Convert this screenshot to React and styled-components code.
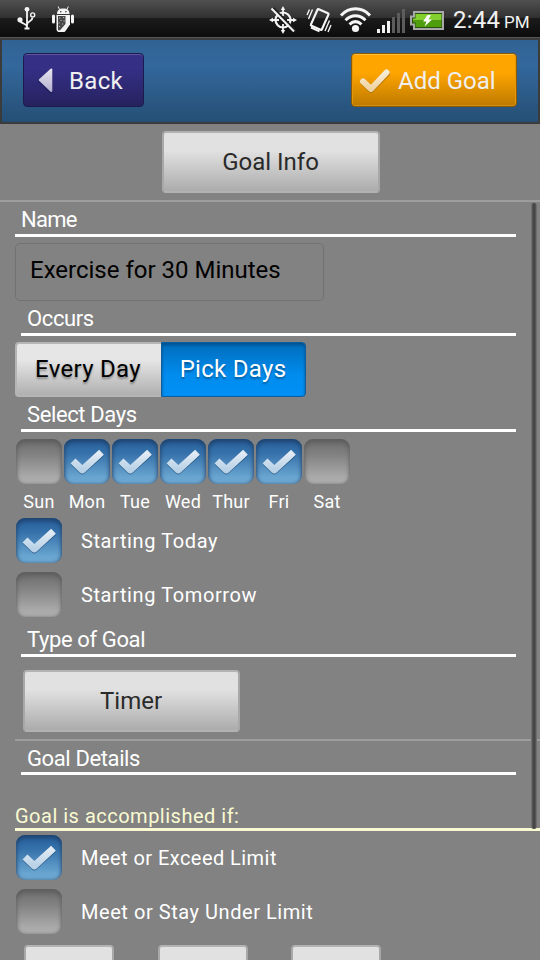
import styled, { createGlobalStyle, css } from "styled-components";

const GlobalStyle = createGlobalStyle`
  * {
    box-sizing: border-box;
  }
  body {
    margin: 0;
    background: #828282;
    font-family: Roboto, "Liberation Sans", sans-serif;
  }
  button, input {
    font-family: inherit;
    margin: 0;
  }
  svg {
    display: block;
    flex: none;
  }
`;

const Screen = styled.div`
  width: 540px;
  height: 960px;
  overflow: hidden;
  display: flex;
  flex-direction: column;
  background: #828282;
`;

const StatusBar = styled.div`
  flex: none;
  height: 38px;
  padding: 0 9px 0 14px;
  display: flex;
  align-items: flex-start;
  justify-content: space-between;
  border-bottom: 1px solid #555;
  background: linear-gradient(#505050 0, #303030 18px, #1b1b1b 18px, #0c0c0c 37px);
`;

const StatusGroup = styled.div`
  display: flex;
`;

const Clock = styled.div`
  width: 86px;
  padding-left: 8px;
  white-space: nowrap;
  line-height: 40px;
  font-size: 24px;
  letter-spacing: 0.2px;
  color: #f2f2f2;
  small {
    font-size: 17px;
    margin-left: 4px;
    letter-spacing: 0;
  }
`;

const Header = styled.header`
  flex: none;
  height: 86px;
  padding: 13px 21px 0;
  display: flex;
  justify-content: space-between;
  align-items: flex-start;
  border: 2px solid #3b3b3b;
  background: linear-gradient(#316294 0, #33689c 30%, #254f75 100%);
`;

const HeaderButton = styled.button`
  height: 54px;
  padding: 1px 0 0;
  display: flex;
  align-items: center;
  border-radius: 4px;
  font-size: 24px;
  line-height: 28px;
  color: #f0f0f0;
  ${({ $accent }) =>
    $accent
      ? css`
          width: 166px;
          border: 1px solid #8a5a04;
          background: linear-gradient(#ffa500 0, #ffa500 35%, #bd7a00 100%);
          box-shadow: inset 0 1px #ffbc3f, inset 1px 0 #e59708, inset -1px 0 #e59708, inset 0 -1px #cf8d12;
          letter-spacing: 0;
        `
      : css`
          width: 121px;
          border: 1px solid #1d1b4e;
          background: linear-gradient(#352f85 0, #352f85 30%, #26225e 100%);
          box-shadow: inset 0 1px #5c579c;
          letter-spacing: 0.35px;
        `}
`;

const GreyButton = styled.button`
  width: ${({ $width }) => $width || 218}px;
  height: 62px;
  padding: 0 1px 0 0;
  border: 2px solid #b2b2b2;
  border-left-color: #a8a8a8;
  border-right-color: #a8a8a8;
  border-radius: 4px;
  background: linear-gradient(#e1e1e1 0, #e1e1e1 30%, #acacac 100%);
  font-size: 24px;
  letter-spacing: 0;
  color: #2a2a2a;
`;

const InfoBar = styled.div`
  flex: none;
  height: 78px;
  padding: 7px 0 0 2px;
  display: flex;
  justify-content: center;
  align-items: flex-start;
  border-bottom: 2px solid #9d9d9d;
`;

const Content = styled.main`
  flex: 1;
  min-height: 0;
  position: relative;
  padding-left: 15px;
`;

const ScrollThumb = styled.div`
  position: absolute;
  top: 1px;
  right: 3px;
  width: 6px;
  height: 626px;
  border-radius: 3px;
  background: linear-gradient(90deg, #7a7a7a, #484848 35%, #454545 65%, #7a7a7a);
`;

const Heading = styled.h2`
  height: ${({ $height }) => $height || 35}px;
  margin: 0 24px 0 ${({ $flush }) => ($flush ? 0 : 6)}px;
  padding-left: 6px;
  display: flex;
  align-items: flex-end;
  border-bottom: 3px solid #fff;
  font-size: 22px;
  font-weight: 400;
  line-height: ${({ $line }) => $line || 28}px;
  letter-spacing: ${({ $flush }) => ($flush ? -0.7 : -0.38)}px;
  color: #fff;
`;

const Condition = styled(Heading)`
  height: 56px;
  margin: 0 0 4px;
  padding-left: 0;
  border-color: #fafad2;
  font-size: 20px;
  line-height: 24px;
  letter-spacing: 0.5px;
  color: #fafad2;
`;

const NameInput = styled.input`
  display: block;
  width: 309px;
  height: 58px;
  margin-top: 6px;
  padding: 0 14px 4px;
  border: 1px solid #717171;
  border-radius: 5px;
  background: transparent;
  font-size: 24px;
  letter-spacing: 0;
  color: #000;
`;

const Segments = styled.div`
  display: flex;
  width: 291px;
  height: 55px;
  margin-top: 6px;
`;

const Segment = styled.button`
  padding: 0 0 1px;
  font-size: 24px;
  letter-spacing: 0.3px;
  text-shadow: 0 2px 2px rgba(0, 0, 0, 0.33);
  ${({ $active }) =>
    $active
      ? css`
          width: 145px;
          padding-right: 1px;
          border: 1px solid #0b5f9f;
          border-radius: 0 4px 4px 0;
          background: linear-gradient(#006cba 0, #008cee 60%, #0090f5 100%);
          box-shadow: inset 0 2px 3px #00508f;
          color: #fff;
        `
      : css`
          width: 146px;
          padding-right: 2px;
          border: 2px solid #b5b5b5;
          border-right-width: 0;
          border-radius: 4px 0 0 4px;
          background: linear-gradient(#e6e6e6 0, #e6e6e6 30%, #b0b0b0 100%);
          color: #000;
        `}
`;

const Days = styled.div`
  display: flex;
  margin-top: 7px;
  height: 79px;
`;

const Day = styled.label`
  width: 48px;
  display: flex;
  flex-direction: column;
  align-items: center;
  font-size: 18px;
  line-height: 22px;
  letter-spacing: 0.25px;
  color: #fff;
  span {
    margin-top: 7px;
  }
`;

const Option = styled.label`
  height: 46px;
  margin: 0 0 8px 1px;
  display: flex;
  align-items: flex-start;
  font-size: 20px;
  line-height: 46px;
  letter-spacing: ${({ $track }) => $track ?? 0.6}px;
  color: #fff;
  span {
    margin-left: 19px;
  }
`;

const OptionGroup = styled.div`
  margin-bottom: -8px;
  height: 108px;
`;

const Tick = styled.div`
  flex: none;
  width: 46px;
  height: 45px;
  border-radius: 9px;
  background: ${({ $on }) =>
    $on
      ? "linear-gradient(#2a619f 0, #3470a9 30%, #69a5d0 85%, #6ba6d0 100%)"
      : "linear-gradient(#6c6c6c 0, #828282 35%, #aaaaaa 85%, #adadad 100%)"};
  box-shadow: inset 0 3px 5px ${({ $on }) => ($on ? "#1c416c" : "#5c5c5c")},
    inset 0 0 3px ${({ $on }) => ($on ? "rgba(80, 105, 130, 0.8)" : "rgba(120, 120, 120, 0.8)")};
`;

const TypeRow = styled.div`
  height: 84px;
  padding: 13px 0 0 8px;
  border-bottom: 2px solid #9d9d9d;
`;

const Amounts = styled.div`
  display: flex;
  gap: 43.5px;
  padding: 10px 0 0 9px;
`;

const UsbIcon = () => (
  <svg width="32" height="37" viewBox="14 0 32 37" fill="none" stroke="#f4f4f4" strokeWidth="1.8">
    <path d="M27 9v19M20 20c0 4 7 3 7 7M32.5 17.5c0 4.500-5.500 3-5.500 7.500" />
    <circle cx="27" cy="9.300" r="2.400" fill="#f4f4f4" stroke="none" />
    <circle cx="20" cy="19.800" r="2.600" fill="#f4f4f4" stroke="none" />
    <circle cx="32.700" cy="14.900" r="2" strokeWidth="1.400" />
    <path d="M24.500 28.500h5" strokeWidth="2" />
  </svg>
);

const RobotIcon = () => (
  <svg width="32" height="37" viewBox="46 0 32 37" fill="#f4f4f4">
    <path d="M57 14c0-3.500 2-5.500 6.300-5.500s6.200 2 6.200 5.500z" />
    <path d="M59.500 9.500 58.200 6.500M67 9.500l1.300-3" stroke="#f4f4f4" />
    <rect x="52" y="14.500" width="3" height="9" rx="1.500" />
    <rect x="71" y="14.500" width="3" height="9" rx="1.500" />
    <path d="M56.500 15H70v9.500l-4.500 6.500-1 1H58l-1.500-2z" />
    <path d="M58 16h7.500v8L60 30.300h-2z" fill="#484848" />
    <path
      d="M59 18h1.200M63 17.500h1.200M60.500 20.500h1.200M63.500 21h1.200M58.500 23h1.200M62 24h1.200M59 26.500h1.200"
      stroke="#bbb"
      strokeWidth="1.200"
    />
    <circle cx="60.800" cy="11.700" r="0.700" fill="#222" />
    <circle cx="65.900" cy="11.700" r="0.700" fill="#222" />
  </svg>
);

const GpsOffIcon = () => (
  <svg width="34" height="37" viewBox="268 0 34 37" fill="none" stroke="#f4f4f4">
    <circle cx="283" cy="20" r="7.500" strokeWidth="2.200" />
    <path d="M283 9v7M283 24v7M272 20h7M287 20h7" strokeWidth="1.800" />
    <path
      d="M283 6l2.200 4h-4.400zM283 34l2.200-4h-4.400zM269 20l4-2.200v4.400zM297 20l-4-2.200v4.400z"
      fill="#f4f4f4"
      stroke="none"
    />
    <path d="M273.500 8 296 31" stroke="#202020" strokeWidth="2" />
    <path d="M271.500 8.500 294 31.500" strokeWidth="2" />
  </svg>
);

const VibrateIcon = () => (
  <svg width="36" height="37" viewBox="302 0 36 37" fill="none" stroke="#f4f4f4">
    <rect
      x="313.500"
      y="10.500"
      width="12"
      height="18"
      rx="1"
      strokeWidth="2.200"
      transform="rotate(24 319.500 20)"
    />
    <path d="M311 27.500l8.500 3.800" strokeWidth="2" />
    <path
      d="M309.500 9.500l-2.500 5.500M312.500 9.500l-4 9.500M329.500 20.500l-4.500 10.500M331 25l-3 7"
      strokeWidth="1.400"
    />
  </svg>
);

const WifiIcon = () => (
  <svg width="37" height="37" viewBox="338 0 37 37" fill="none" stroke="#f6f6f6" strokeWidth="3">
    <path d="M341 15.500c8-9 21-9 29 0M345.500 20.200c6-6 14-6 20 0M349.500 24.300c4-3.600 8-3.600 12 0" />
    <circle cx="355.500" cy="28.500" r="3.600" fill="#f6f6f6" stroke="none" />
  </svg>
);

const SignalIcon = () => (
  <svg width="33" height="37" viewBox="375 0 33 37">
    {[29, 25, 21, 17, 13, 9].map((top, i) => (
      <rect
        key={top}
        x={377 + i * 5}
        y={top}
        width="3"
        height={33 - top}
        fill={i < 3 ? "#f2f2f2" : "#5c5c5c"}
      />
    ))}
  </svg>
);

const BatteryIcon = () => (
  <svg width="37" height="37" viewBox="408 0 37 37">
    <path d="M414 12H443V29H414V24.500H411V16.500H414z" fill="#2b4d12" stroke="#a9a9a9" strokeWidth="2" />
    <path d="M415.500 14h26v6.500h-28.500v-2h2.500z" fill="#82cf2e" />
    <path d="M413 20.500h28.500v6.500h-26v-4.500H413z" fill="#4e9e0c" />
    <path d="M427.500 15l-4.500 6.500h3.500L424.500 26.500l7.500-7h-3.500l2.500-4.500z" fill="#fff" />
  </svg>
);

const ArrowIcon = () => (
  <svg width="45" height="52" viewBox="24 54 45 52">
    <defs>
      <linearGradient id="arrow" x1="0" y1="0" x2="0" y2="1">
        <stop offset="0" stopColor="#e6e4ee" />
        <stop offset="1" stopColor="#b6b2d2" />
      </linearGradient>
    </defs>
    <path
      d="M39.500 80.500 51 69.500v22z"
      fill="#1d1950"
      stroke="#1d1950"
      strokeWidth="3"
      strokeLinejoin="round"
      opacity=".45"
    />
    <path
      d="M39.800 79 51.300 68.500V90z"
      fill="url(#arrow)"
      stroke="url(#arrow)"
      strokeWidth="2"
      strokeLinejoin="round"
    />
  </svg>
);

const AddIcon = () => (
  <svg
    width="46"
    height="52"
    viewBox="353 54 46 52"
    fill="none"
    strokeWidth="6"
    strokeLinejoin="round"
    strokeLinecap="round"
  >
    <defs>
      <linearGradient id="addCheck" x1="0" y1="0" x2="0" y2="1">
        <stop offset="0" stopColor="#f7ecd8" />
        <stop offset="1" stopColor="#efd3a0" />
      </linearGradient>
    </defs>
    <path d="M364.300 81.500 372 89 388 73" stroke="#6b4500" opacity=".35" />
    <path d="M364 80.500 372 88 387.500 71.500" stroke="url(#addCheck)" strokeWidth="6" />
  </svg>
);

const CheckIcon = () => (
  <svg width="46" height="45" viewBox="0 0 46 45" fill="none" strokeWidth="7" strokeLinejoin="round">
    <defs>
      <linearGradient id="check" x1="0" y1="0" x2="0" y2="1">
        <stop offset="0" stopColor="#e3ecf4" />
        <stop offset="1" stopColor="#b9d2e7" />
      </linearGradient>
    </defs>
    <path d="M9.200 23.200 18.300 32 37.800 14.200" stroke="#173f68" opacity=".5" />
    <path d="M9 22 18.300 30.900 37.500 13.200" stroke="url(#check)" />
  </svg>
);

const days = [
  ["Sun", false],
  ["Mon", true],
  ["Tue", true],
  ["Wed", true],
  ["Thur", true],
  ["Fri", true],
  ["Sat", false],
];

function Checkbox({ checked }) {
  return <Tick $on={checked}>{checked && <CheckIcon />}</Tick>;
}

function CheckOption({ checked, track, children }) {
  return (
    <Option $track={track}>
      <Checkbox checked={checked} />
      <span>{children}</span>
    </Option>
  );
}

export default function App() {
  return (
    <Screen>
      <GlobalStyle />
      <StatusBar>
        <StatusGroup>
          <UsbIcon />
          <RobotIcon />
        </StatusGroup>
        <StatusGroup>
          <GpsOffIcon />
          <VibrateIcon />
          <WifiIcon />
          <SignalIcon />
          <BatteryIcon />
          <Clock>
            2:44<small>PM</small>
          </Clock>
        </StatusGroup>
      </StatusBar>
      <Header>
        <HeaderButton>
          <ArrowIcon />
          Back
        </HeaderButton>
        <HeaderButton $accent>
          <AddIcon />
          Add Goal
        </HeaderButton>
      </Header>
      <InfoBar>
        <GreyButton>Goal Info</GreyButton>
      </InfoBar>
      <Content>
        <Heading $flush>Name</Heading>
        <NameInput defaultValue="Exercise for 30 Minutes" />
        <Heading>Occurs</Heading>
        <Segments>
          <Segment>Every Day</Segment>
          <Segment $active>Pick Days</Segment>
        </Segments>
        <Heading>Select Days</Heading>
        <Days>
          {days.map(([name, checked]) => (
            <Day key={name}>
              <Checkbox checked={checked} />
              <span>{name}</span>
            </Day>
          ))}
        </Days>
        <OptionGroup>
          <CheckOption checked>Starting Today</CheckOption>
          <CheckOption>Starting Tomorrow</CheckOption>
        </OptionGroup>
        <Heading $height={39}>Type of Goal</Heading>
        <TypeRow>
          <GreyButton $width={217}>Timer</GreyButton>
        </TypeRow>
        <Heading $height={34} $line={26}>
          Goal Details
        </Heading>
        <Condition>Goal is accomplished if:</Condition>
        <OptionGroup>
          <CheckOption checked track={0.45}>
            Meet or Exceed Limit
          </CheckOption>
          <CheckOption track={0.55}>Meet or Stay Under Limit</CheckOption>
        </OptionGroup>
        <Amounts>
          <GreyButton $width={90} />
          <GreyButton $width={90} />
          <GreyButton $width={90} />
        </Amounts>
        <ScrollThumb />
      </Content>
    </Screen>
  );
}
